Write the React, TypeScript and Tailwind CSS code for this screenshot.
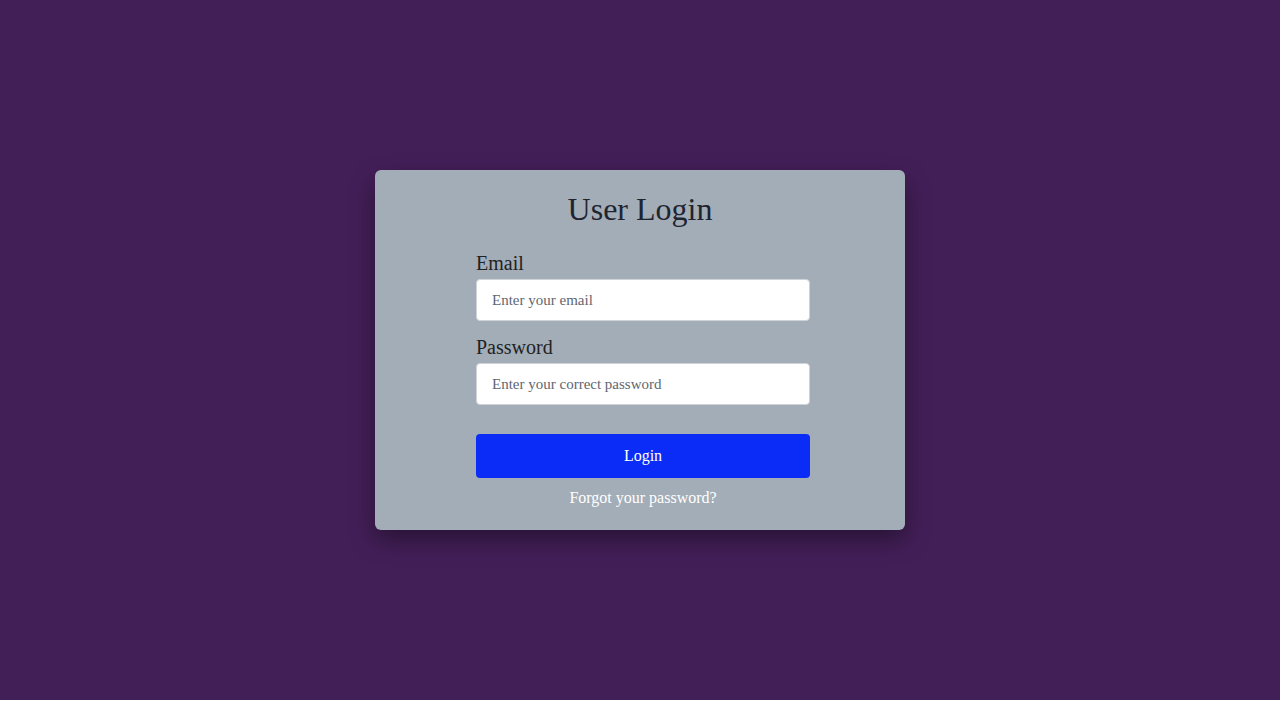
import { useState } from "react";

const App = () => {
  const [email, setEmail] = useState("");
  const [password, setPassword] = useState("");

  const handleLogin = (e: React.FormEvent) => {
    e.preventDefault();
  };

  return (
    <div
      className="h-[700px] w-full flex justify-center items-center bg-[#431f58]"
      style={{ fontFamily: '"Liberation Serif", "Times New Roman", serif' }}
    >
      <div className="bg-[#a3adb7] w-[530px] h-[360px] pt-5 rounded-md shadow-[0_10px_24px_rgba(0,0,0,0.4)]">
        <h1 className="text-[32px] leading-[38px] text-center text-[#1f2430]">
          User Login
        </h1>
        <form
          className="flex flex-col ml-[101px] w-[334px] mt-[22px]"
          onSubmit={handleLogin}
        >
          <label className="text-[20px] leading-[26px] text-[#222]">Email</label>
          <input
            type="email"
            placeholder="Enter your email"
            value={email}
            onChange={(e) => setEmail(e.target.value)}
            className="mt-[3px] h-[42px] bg-white border border-[#cfd3d8] rounded px-[15px] text-[15px] placeholder:text-[#5f6670] outline-none"
          />
          <label className="mt-[13px] text-[20px] leading-[26px] text-[#222]">
            Password
          </label>
          <input
            type="password"
            placeholder="Enter your correct password"
            value={password}
            onChange={(e) => setPassword(e.target.value)}
            className="mt-[3px] h-[42px] bg-white border border-[#cfd3d8] rounded px-[15px] text-[15px] placeholder:text-[#5f6670] outline-none"
          />
          <button
            type="submit"
            className="mt-[29px] h-[44px] bg-[#0b2cf6] text-white text-[16px] rounded"
          >
            Login
          </button>
          <a href="#" className="mt-2 text-center text-white text-[16px] leading-6">
            Forgot your password?
          </a>
        </form>
      </div>
    </div>
  );
};

export default App;
